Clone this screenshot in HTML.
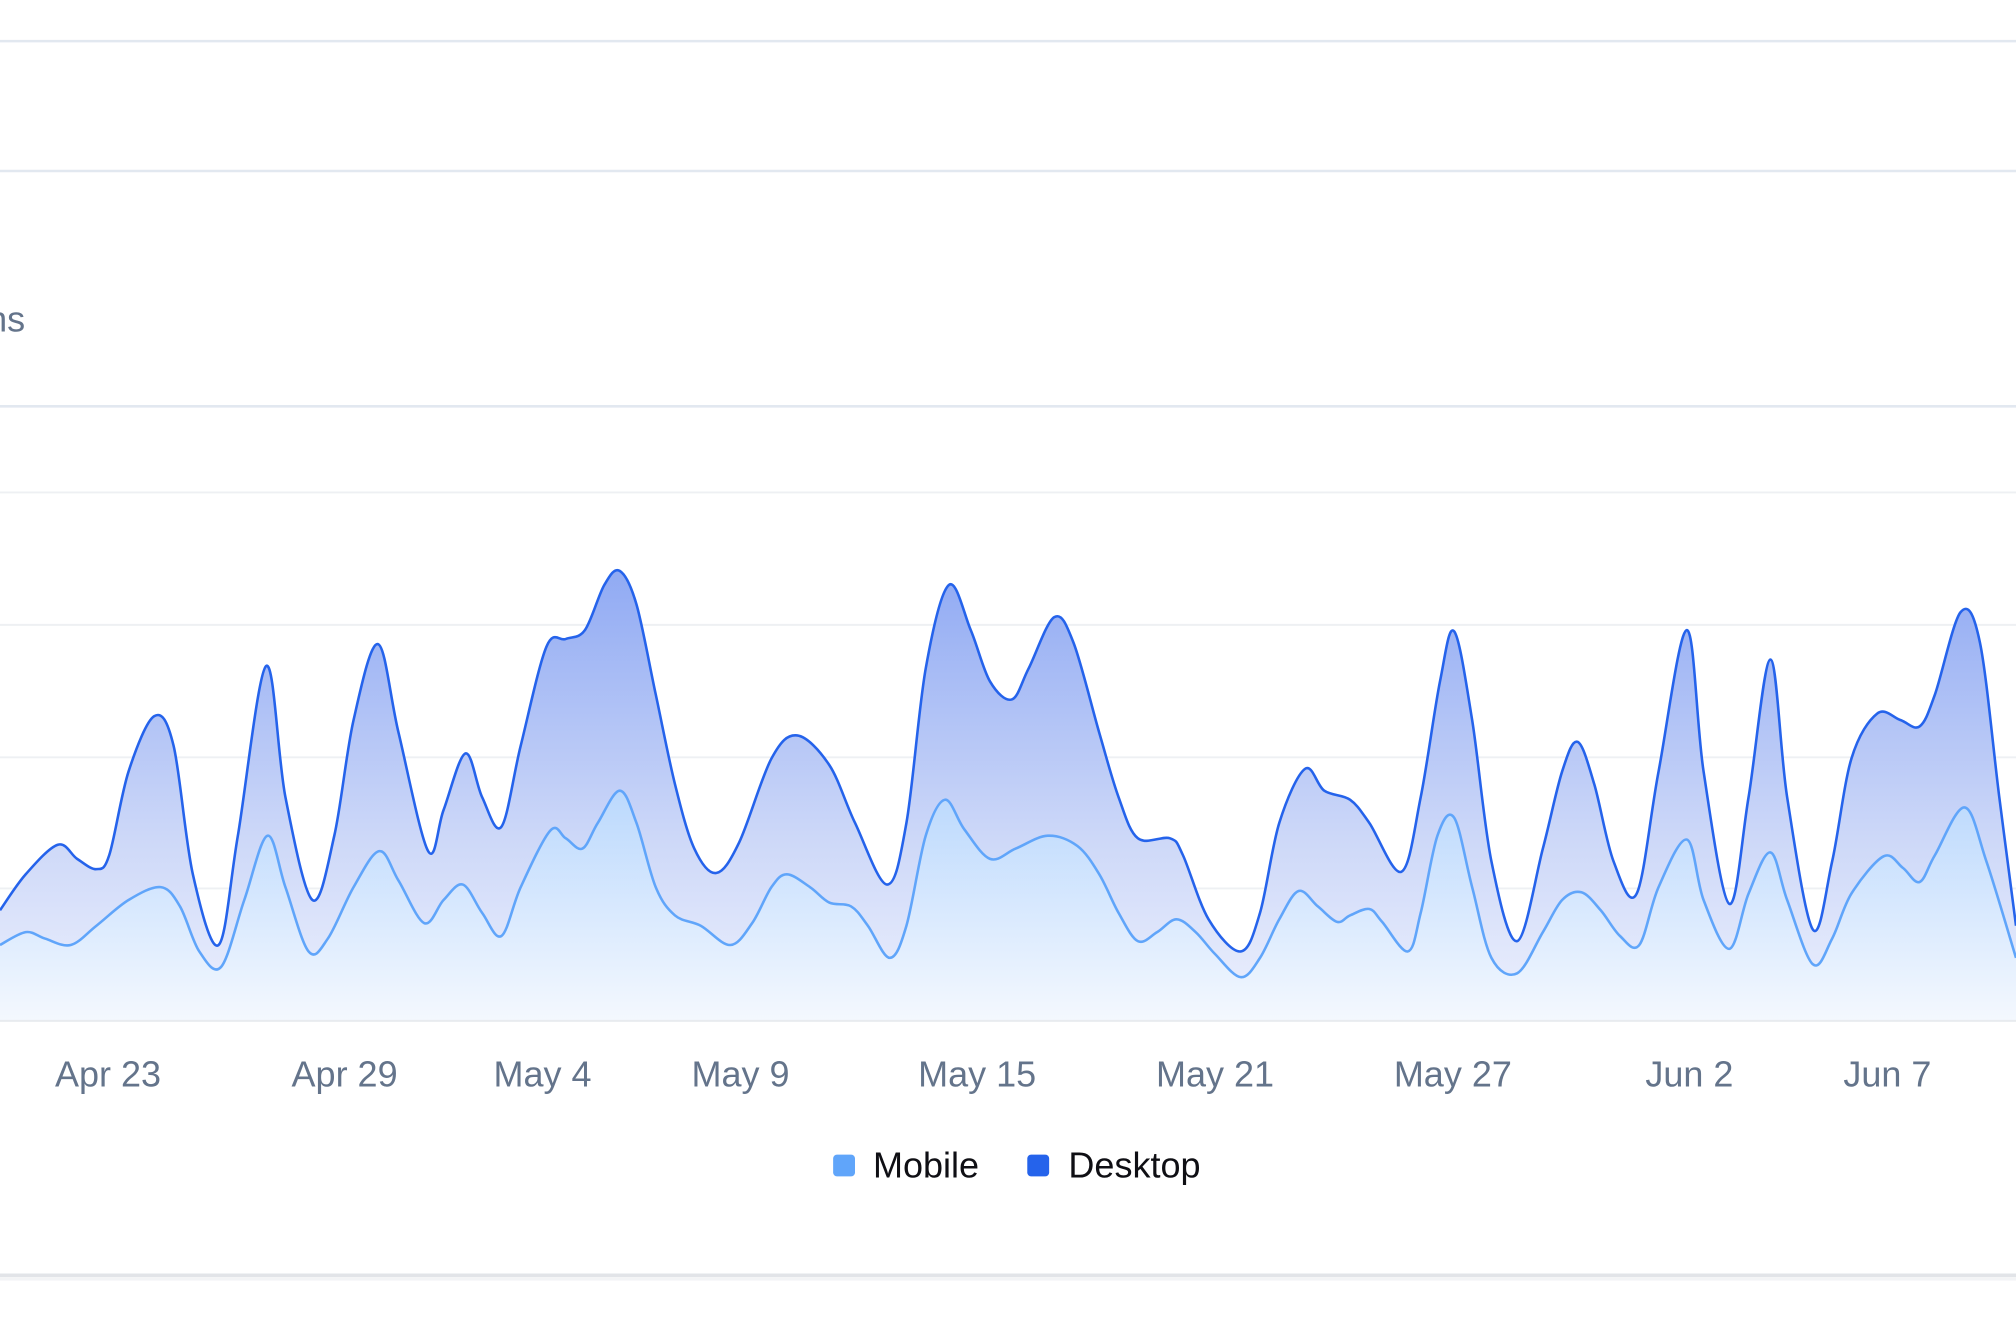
<!DOCTYPE html>
<html><head><meta charset="utf-8"><style>
html,body{margin:0;padding:0;background:#fff;width:2016px;height:1344px;overflow:hidden}
svg{display:block}
text{font-family:"Liberation Sans",sans-serif}
</style></head><body>
<svg width="2016" height="1344" viewBox="0 0 1568 1045.33" xmlns="http://www.w3.org/2000/svg">
<defs>
<linearGradient id="gd" x1="0" y1="440" x2="0" y2="794" gradientUnits="userSpaceOnUse">
<stop offset="0" stop-color="#8fa9f3"/><stop offset="0.6" stop-color="#cdd8f8"/><stop offset="1" stop-color="#eef1fd"/></linearGradient>
<linearGradient id="gm" x1="0" y1="600" x2="0" y2="794" gradientUnits="userSpaceOnUse">
<stop offset="0" stop-color="#b6d6fd"/><stop offset="1" stop-color="#f4f8fe"/></linearGradient>
</defs>
<line x1="0" y1="32" x2="1568" y2="32" stroke="#e2e8f0" stroke-width="2"/>
<line x1="0" y1="133" x2="1568" y2="133" stroke="#e2e8f0" stroke-width="2"/>
<line x1="0" y1="316" x2="1568" y2="316" stroke="#e2e8f0" stroke-width="2"/>
<text x="-10" y="258" font-size="28" fill="#64748b">ns</text>
<g stroke="#eef0f3" stroke-width="1.5">
<line x1="0" y1="383" x2="1568" y2="383"/><line x1="0" y1="486" x2="1568" y2="486"/>
<line x1="0" y1="589" x2="1568" y2="589"/><line x1="0" y1="691" x2="1568" y2="691"/>
</g>
<polygon id="dA" fill="url(#gd)" points="0,794 0,708 20,680 45,657 60,668 75,676 85,665 100,600 120,557 135,580 150,680 170,735 185,650 207,518 222,620 243,700 260,650 275,560 294,501 310,570 333,662 345,630 362,586 375,620 390,643 405,580 425,503 440,497 455,490 470,455 482,444 495,470 510,540 525,610 540,660 557,679 575,655 600,590 620,572 645,595 665,640 690,688 705,640 720,520 738,455 755,490 770,530 787,544 800,520 820,480 835,500 855,570 870,620 885,652 910,652 920,665 940,715 965,740 980,710 995,640 1015,598 1030,615 1050,622 1065,640 1090,678 1105,620 1120,530 1131,491 1145,560 1160,670 1180,732 1200,660 1215,600 1227,577 1240,610 1255,670 1273,695 1290,600 1312,490 1325,600 1345,703 1360,620 1377,513 1390,620 1410,723 1425,670 1440,590 1460,555 1478,560 1493,565 1505,540 1525,476 1540,500 1555,620 1568,720 1568,794"/>
<polygon id="mA" fill="url(#gm)" points="0,794 0,735 20,725 35,730 55,735 75,720 100,700 125,690 140,705 155,740 172,752 190,700 208,650 222,690 240,740 255,730 275,690 295,662 310,685 330,718 345,700 360,688 375,710 390,728 405,690 428,646 440,652 453,660 465,640 482,615 495,640 510,690 525,712 545,720 568,735 585,718 600,690 612,680 630,690 645,702 662,705 675,720 692,745 705,720 720,650 735,622 750,645 770,668 790,660 815,650 838,658 855,680 870,710 885,732 900,725 915,715 930,725 945,742 965,760 980,745 995,715 1010,693 1025,705 1040,717 1050,712 1065,707 1075,717 1095,740 1105,710 1118,650 1131,636 1145,690 1160,745 1180,757 1200,725 1215,700 1230,694 1245,708 1260,728 1275,735 1290,690 1312,653 1325,700 1345,738 1360,695 1377,663 1390,700 1410,750 1425,730 1440,695 1465,666 1480,675 1493,686 1505,665 1528,628 1545,670 1568,745 1568,794"/>
<polyline id="dL" fill="none" stroke="#2563eb" stroke-width="2" stroke-linejoin="round" points="0,708 20,680 45,657 60,668 75,676 85,665 100,600 120,557 135,580 150,680 170,735 185,650 207,518 222,620 243,700 260,650 275,560 294,501 310,570 333,662 345,630 362,586 375,620 390,643 405,580 425,503 440,497 455,490 470,455 482,444 495,470 510,540 525,610 540,660 557,679 575,655 600,590 620,572 645,595 665,640 690,688 705,640 720,520 738,455 755,490 770,530 787,544 800,520 820,480 835,500 855,570 870,620 885,652 910,652 920,665 940,715 965,740 980,710 995,640 1015,598 1030,615 1050,622 1065,640 1090,678 1105,620 1120,530 1131,491 1145,560 1160,670 1180,732 1200,660 1215,600 1227,577 1240,610 1255,670 1273,695 1290,600 1312,490 1325,600 1345,703 1360,620 1377,513 1390,620 1410,723 1425,670 1440,590 1460,555 1478,560 1493,565 1505,540 1525,476 1540,500 1555,620 1568,720"/>
<polyline id="mL" fill="none" stroke="#60a5fa" stroke-width="2" stroke-linejoin="round" points="0,735 20,725 35,730 55,735 75,720 100,700 125,690 140,705 155,740 172,752 190,700 208,650 222,690 240,740 255,730 275,690 295,662 310,685 330,718 345,700 360,688 375,710 390,728 405,690 428,646 440,652 453,660 465,640 482,615 495,640 510,690 525,712 545,720 568,735 585,718 600,690 612,680 630,690 645,702 662,705 675,720 692,745 705,720 720,650 735,622 750,645 770,668 790,660 815,650 838,658 855,680 870,710 885,732 900,725 915,715 930,725 945,742 965,760 980,745 995,715 1010,693 1025,705 1040,717 1050,712 1065,707 1075,717 1095,740 1105,710 1118,650 1131,636 1145,690 1160,745 1180,757 1200,725 1215,700 1230,694 1245,708 1260,728 1275,735 1290,690 1312,653 1325,700 1345,738 1360,695 1377,663 1390,700 1410,750 1425,730 1440,695 1465,666 1480,675 1493,686 1505,665 1528,628 1545,670 1568,745"/>
<line x1="0" y1="794" x2="1568" y2="794" stroke="#e8ebef" stroke-width="1.5"/>
<g font-size="28" fill="#64748b" text-anchor="middle">
<text x="84" y="845">Apr 23</text><text x="268" y="845">Apr 29</text><text x="422" y="845">May 4</text>
<text x="576" y="845">May 9</text><text x="760" y="845">May 15</text><text x="945" y="845">May 21</text>
<text x="1130" y="845">May 27</text><text x="1314" y="845">Jun 2</text><text x="1468" y="845">Jun 7</text>
</g>
<rect x="648" y="898" width="17" height="17" rx="3" fill="#60a5fa"/>
<text x="679" y="916" font-size="28" fill="#0f0f14">Mobile</text>
<rect x="799" y="898" width="17" height="17" rx="3" fill="#2563eb"/>
<text x="831" y="916" font-size="28" fill="#0f0f14">Desktop</text>
<line x1="0" y1="992" x2="1568" y2="992" stroke="#e2e4e8" stroke-width="3"/>
<line x1="0" y1="995" x2="1568" y2="995" stroke="#f3f4f6" stroke-width="2"/>
</svg>
<script>
(function(){
function pts(el){return el.getAttribute('points').trim().split(/\s+/).map(function(s){var a=s.split(',');return [+a[0],+a[1]];});}
function smooth(p){var d='M'+p[0][0]+','+p[0][1];for(var i=0;i<p.length-1;i++){var p0=p[i-1]||p[i],p1=p[i],p2=p[i+1],p3=p[i+2]||p2;var t=6;
d+=' C'+(p1[0]+(p2[0]-p0[0])/t)+','+(p1[1]+(p2[1]-p0[1])/t)+' '+(p2[0]-(p3[0]-p1[0])/t)+','+(p2[1]-(p3[1]-p1[1])/t)+' '+p2[0]+','+p2[1];}return d;}
var ns='http://www.w3.org/2000/svg';
function rep(id,area){var el=document.getElementById(id);var p=pts(el);var path=document.createElementNS(ns,'path');
if(area){var inner=p.slice(1,p.length-1);path.setAttribute('d','M0,794 L'+inner[0][0]+','+inner[0][1]+smooth(inner).replace(/^M[^C]*/,' ')+' L1568,794 Z');}
else path.setAttribute('d',smooth(p));
['fill','stroke','stroke-width','stroke-linejoin'].forEach(function(a){if(el.getAttribute(a))path.setAttribute(a,el.getAttribute(a));});
el.parentNode.replaceChild(path,el);}
try{rep('dA',1);rep('mA',1);rep('dL',0);rep('mL',0);}catch(e){}
})();
</script>
</body></html>
